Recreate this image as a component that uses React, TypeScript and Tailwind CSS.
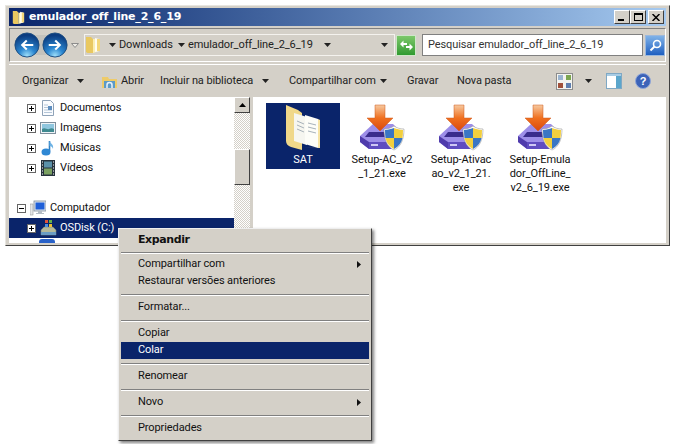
import React from 'react';

const font = { fontFamily: 'Roboto, sans-serif' };
const boldFont = { fontFamily: '"DejaVu Sans", sans-serif' };

const Arrow = ({ className = '' }: { className?: string }) => (
  <svg width="7" height="4" viewBox="0 0 7 4" className={`shrink-0 ${className}`}>
    <path d="M0 0h7L3.500 4z" fill="#222" />
  </svg>
);

const SmallFolder = ({ w = 16, h = 18 }: { w?: number; h?: number }) => (
  <svg width={w} height={h} viewBox="0 0 16 18" className="shrink-0">
    <path d="M1 1h5l2 2v14H2.500L1 16z" fill="#e9c860" />
    <path d="M8 3h6v12l-6 2z" fill="#fbeeb0" />
    <path d="M10 2l4 1v12l-4 1z" fill="#fffdf0" />
    <path d="M12 3h3v12h-3z" fill="#f3d77a" />
  </svg>
);

const NavButton = ({ dir }: { dir: 'left' | 'right' }) => (
  <svg width="26" height="26" viewBox="0 0 27 27" className="shrink-0">
    <defs>
      <radialGradient id={`nav-${dir}`} cx="50%" cy="95%" r="85%">
        <stop offset="0" stopColor="#9fe0fa" />
        <stop offset="0.400" stopColor="#2a86d0" />
        <stop offset="1" stopColor="#0b3c80" />
      </radialGradient>
    </defs>
    <circle cx="13.500" cy="13.500" r="12.500" fill={`url(#nav-${dir})`} stroke="#1c4d80" />
    <path
      d={dir === 'left' ? 'M7 13.500l5.500-5.500 1.500 1.500-3 3h9v2h-9l3 3-1.500 1.500z' : 'M20 13.500l-5.500-5.500-1.500 1.500 3 3H7v2h9l-3 3 1.500 1.500z'}
      fill="#fff"
    />
  </svg>
);

const Plus = ({ minus = false }: { minus?: boolean }) => (
  <svg width="9" height="9" viewBox="0 0 9 9" className="shrink-0">
    <rect x="0.500" y="0.500" width="8" height="8" fill="#fff" stroke="#666" />
    <path d={minus ? 'M2 4.500h5' : 'M2 4.500h5M4.500 2v5'} stroke="#000" />
  </svg>
);

const DocIcon = () => (
  <svg width="16" height="16" viewBox="0 0 16 16">
    <path d="M2.500.5h8l3 3v12h-11z" fill="#fafcff" stroke="#8fa3b8" />
    <path d="M4 5h4M4 7.500h8M4 10h8M4 12.500h8" stroke="#b4c6d8" />
    <rect x="8" y="6" width="4" height="4" fill="#5f8fc0" />
  </svg>
);

const ImageIcon = () => (
  <svg width="16" height="16" viewBox="0 0 16 16">
    <rect x="0.500" y="2.500" width="15" height="11" fill="#eef3f7" stroke="#7f8f9c" />
    <rect x="2" y="4" width="12" height="8" fill="#8fc6de" />
    <path d="M2 12V9c3-2 5 1 7 0s3-1 5 0v3z" fill="#3f8a90" />
  </svg>
);

const MusicIcon = () => (
  <svg width="16" height="16" viewBox="0 0 16 16">
    <path d="M9.500 1v10.500" stroke="#2f7fc2" strokeWidth="1.600" />
    <ellipse cx="6" cy="12" rx="4.500" ry="3.500" fill="#2f88d4" />
    <path d="M9.500 1c1 3 4.500 3 3.500 8-.5-2-2-3-3.500-3z" fill="#6db2e4" />
  </svg>
);

const FilmIcon = () => (
  <svg width="16" height="16" viewBox="0 0 16 16">
    <rect x="1" y="0" width="14" height="16" fill="#26323c" />
    <rect x="4" y="1.500" width="8" height="6" fill="#5a90a8" />
    <rect x="4" y="8.500" width="8" height="6" fill="#7aa060" />
    <path d="M2 2h1M2 5h1M2 8h1M2 11h1M2 14h1M13 2h1M13 5h1M13 8h1M13 11h1M13 14h1" stroke="#fff" />
  </svg>
);

const ComputerIcon = () => (
  <svg width="16" height="16" viewBox="0 0 16 16">
    <rect x="0" y="4" width="3" height="11" fill="#e4e6e8" stroke="#8a8a8a" strokeWidth="0.500" />
    <rect x="4" y="1" width="12" height="10" fill="#dfe6ee" stroke="#7d8a99" strokeWidth="0.800" />
    <rect x="5.500" y="2.500" width="9" height="7" fill="#1f5fd8" />
    <path d="M8 11h4v2h2v1H6v-1h2z" fill="#b4bcc4" />
  </svg>
);

const DriveIcon = () => (
  <svg width="18" height="18" viewBox="0 0 18 18" className="shrink-0">
    <path d="M2 11l3-3h9l3 3v5H2z" fill="#b4b89a" stroke="#7a8070" strokeWidth="0.600" />
    <rect x="2" y="13" width="15" height="3" fill="#6a9cc4" />
    <rect x="6" y="1" width="3" height="3" fill="#e2543a" />
    <rect x="10" y="1" width="3" height="3" fill="#62b04a" />
    <rect x="6" y="5" width="3" height="3" fill="#4a8ee0" />
    <rect x="10" y="5" width="3" height="3" fill="#f0c030" />
  </svg>
);

const SetupIcon = () => (
  <svg width="48" height="48" viewBox="0 0 48 48">
    <defs>
      <linearGradient id="setup-arrow" x1="0" y1="0" x2="0" y2="1">
        <stop offset="0" stopColor="#f6c9a0" />
        <stop offset="0.500" stopColor="#f0701f" />
        <stop offset="1" stopColor="#d9480f" />
      </linearGradient>
    </defs>
    <path d="M2 32l13-12h20l8 8v9L34 45H11L2 38z" fill="#9d8ee8" />
    <path d="M2 32l9 6v7l-9-7z" fill="#4f3bac" />
    <path d="M11 38h23v7H11z" fill="#5f4cc0" />
    <path d="M11 28h18l5 5H7z" fill="#3a2c8c" />
    <rect x="13" y="40" width="7" height="2" fill="#cfc8f4" />
    <path d="M17 1h10v13h8L22 27 9 14h8z" fill="url(#setup-arrow)" stroke="#cf5a1c" strokeWidth="0.500" />
    <path d="M36 22c3 2 6 3 10 3 0 10-3 18-10 21-7-3-10-11-10-21 4 0 7-1 10-3z" fill="#fff" stroke="#8a8a8a" strokeWidth="0.500" />
    <path d="M36 24v10h-8.500c-.3-2.500-.5-5-.5-8 3.500-.2 6-1 9-2z" fill="#3a76c4" />
    <path d="M36 24c3 1 5.500 1.800 9 2 0 3-.2 5.500-.5 8H36z" fill="#f2cf3e" />
    <path d="M27.500 34H36v11c-4.500-2.400-7.500-6-8.500-11z" fill="#f2cf3e" />
    <path d="M36 34h8.500c-1 5-4 8.600-8.500 11z" fill="#3a76c4" />
  </svg>
);

const BigFolder = () => (
  <svg width="38" height="47" viewBox="0 0 38 47">
    <path d="M2 0l12 5 4 3v37L7 42c-3-1-5-3-5-6z" fill="#f0d88a" />
    <path d="M10 8l13 4v28l-13-4z" fill="#f6f6f0" />
    <path d="M21 10l13 4v29l-13-4z" fill="#fdfdf8" />
    <path d="M13 16l7 3M13 20l7 3M13 24l7 3M24 18l8 2M24 22l8 2M24 26l8 2" stroke="#a8b2ba" />
    <path d="M34 14l2 1v28l-16-1 14 1z" fill="#f6e3a4" />
  </svg>
);

const ViewsIcon = () => (
  <svg width="17" height="17" viewBox="0 0 17 17">
    <rect x="0.500" y="0.500" width="16" height="16" fill="#f4f4f0" stroke="#8c8c8c" />
    <rect x="2" y="2" width="5" height="5" fill="#9ab4d0" />
    <rect x="10" y="2" width="5" height="5" fill="#7ca650" />
    <rect x="2" y="10" width="5" height="5" fill="#a0503a" />
    <rect x="10" y="10" width="5" height="5" fill="#5f7fb0" />
  </svg>
);

const PaneIcon = () => (
  <svg width="16" height="16" viewBox="0 0 16 16">
    <rect x="0.500" y="0.500" width="15" height="15" fill="#fff" stroke="#7fa8c4" />
    <rect x="1" y="1" width="14" height="2" fill="#a8cce4" />
    <rect x="10" y="3" width="5" height="12" fill="#5ba6cc" />
  </svg>
);

const HelpIcon = () => (
  <svg width="16" height="16" viewBox="0 0 16 16">
    <circle cx="8" cy="8" r="7.500" fill="#3c63b8" stroke="#8fa6d8" />
    <text x="8" y="12" textAnchor="middle" fontSize="11" fontWeight="bold" fill="#fff" fontFamily="Liberation Sans">?</text>
  </svg>
);

const WinButton = ({ children }: { children: React.ReactNode }) => (
  <div className="w-[16px] h-[14px] bg-[#d4d0c8] border border-t-white border-l-white border-r-[#404040] border-b-[#404040] flex items-center justify-center">
    {children}
  </div>
);

const TreeRow = ({ icon, label, selected = false, indent = 'pl-[18px]', minus = false }: {
  icon: React.ReactNode; label: string; selected?: boolean; indent?: string; minus?: boolean;
}) => (
  <div className={`h-[20px] flex items-center shrink-0 ${indent} ${selected ? 'bg-[#0a246a] text-white' : 'text-[#111]'}`}>
    <Plus minus={minus} />
    <span className="w-[16px] ml-[4px] flex justify-center shrink-0">{icon}</span>
    <span className="whitespace-nowrap ml-[4px]">{label}</span>
  </div>
);

const FileItem = ({ name }: { name: string[] }) => (
  <div className="w-[74px] flex flex-col items-center shrink-0 text-[#111]">
    <div className="h-[48px] mt-[1px]"><SetupIcon /></div>
    <div className="text-center leading-[14px] mt-[1px]">
      {name.map((line) => <div key={line} className="whitespace-nowrap">{line}</div>)}
    </div>
  </div>
);

const MenuSep = ({ short = false }: { short?: boolean }) => (
  <div className={`${short ? 'h-[7px]' : 'h-[9px]'} flex flex-col justify-center`}>
    <div className="h-[1px] bg-[#808080]" />
    <div className="h-[1px] bg-white" />
  </div>
);

const MenuItem = ({ label, active = false, sub = false }: {
  label: string; active?: boolean; sub?: boolean;
}) => (
  <div className={`h-[17px] flex items-center justify-between pl-[17px] pr-[8px] ${active ? 'bg-[#0a246a] text-white' : 'text-[#111]'}`}>
    <span className="whitespace-nowrap">{label}</span>
    {sub && (
      <svg width="4" height="7" viewBox="0 0 4 7"><path d="M0 0l4 3.500L0 7z" fill="#111" /></svg>
    )}
  </div>
);

export default function App() {
  return (
    <div className="relative w-[676px] h-[444px] bg-white overflow-hidden text-[11px] tracking-[-0.1px] pt-[5px] px-[5px]" style={font}>
      <div className="w-[665px] h-[241px] bg-[#d4d0c8] border border-t-[#e8e6e0] border-l-[#e8e6e0] border-r-[#404040] border-b-[#404040] px-[3px] pt-[2px] pb-[3px] flex flex-col">
        {/* title bar */}
        <div className="h-[18px] shrink-0 bg-gradient-to-r from-[#0a246a] to-[#a6caf0] flex items-center pl-[3px] pr-[2px]">
          <SmallFolder w={13} h={15} />
          <span className="ml-[4px] text-white font-bold text-[11px] tracking-[-0.2px]" style={boldFont}>emulador_off_line_2_6_19</span>
          <div className="ml-auto flex items-center">
            <WinButton><div className="w-[6px] h-[2px] bg-black mt-[6px] mr-[2px]" /></WinButton>
            <WinButton><div className="w-[9px] h-[8px] border border-black border-t-2" /></WinButton>
            <div className="ml-[2px]">
              <WinButton>
                <svg width="8" height="7" viewBox="0 0 8 7"><path d="M0.500 0L7.500 7M7.500 0L0.500 7" stroke="#000" strokeWidth="1.500" /></svg>
              </WinButton>
            </div>
          </div>
        </div>

        {/* address row */}
        <div className="h-[34px] mt-[2px] shrink-0 border border-t-[#808080] border-l-[#808080] border-r-white border-b-white flex items-center pl-[4px] whitespace-nowrap">
          <div className="flex items-center gap-[2px] bg-[#c4c2bc] rounded-full h-[20px]">
            <NavButton dir="left" />
            <NavButton dir="right" />
          </div>
          <svg width="8" height="5" viewBox="0 0 8 5" className="ml-[3px] shrink-0">
            <path d="M0.500 0.500h7L4 4.500z" fill="#eeece6" stroke="#8c8c8c" />
          </svg>
          <div className="ml-[5px] w-[311px] h-[22px] bg-[#d4d0c8] border border-[#f4f2ee] flex items-center text-[#222] shrink-0">
            <SmallFolder />
            <Arrow className="ml-[8px]" />
            <span className="ml-[3px] w-[52px]">Downloads</span>
            <Arrow className="ml-[7px]" />
            <span className="ml-[3px] w-[128px]">emulador_off_line_2_6_19</span>
            <Arrow className="ml-[8px]" />
            <Arrow className="ml-auto mr-[6px]" />
          </div>
          <div className="ml-[1px] w-[20px] h-[21px] bg-gradient-to-b from-[#7cc86a] to-[#2f9a30] border border-[#cfe6c8] flex items-center justify-center shrink-0">
            <svg width="15" height="11" viewBox="0 0 15 11">
              <path d="M1 4l3.500-3.500V3H8v2H4.500v2.500z" fill="#fff" />
              <path d="M14 7l-3.500 3.500V8H7V6h3.500V3.500z" fill="#fff" />
            </svg>
          </div>
          <div className="ml-[6px] w-[221px] h-[22px] bg-white border border-[#808080] flex items-center pl-[5px] text-[#333] shrink-0">Pesquisar emulador_off_line_2_6_19</div>
          <div className="ml-[2px] w-[20px] h-[21px] bg-gradient-to-b from-[#7fb2e8] to-[#1f5fc0] border border-[#9cb8dc] flex items-center justify-center shrink-0">
            <svg width="13" height="13" viewBox="0 0 13 13">
              <circle cx="8" cy="5" r="3.500" fill="none" stroke="#fff" strokeWidth="1.600" />
              <path d="M5.500 7.500L1.500 11.500" stroke="#fff" strokeWidth="2" />
            </svg>
          </div>
        </div>

        {/* command bar */}
        <div className="h-[33px] mt-[2px] shrink-0 border-t border-t-white flex items-center text-[#222] whitespace-nowrap">
          <span className="ml-[13px] w-[48px]">Organizar</span>
          <Arrow className="ml-[7px]" />
          <svg width="17" height="17" viewBox="0 0 17 17" className="ml-[17px] shrink-0">
            <path d="M1 4h6l1 2h8v9H1z" fill="#eecb6a" />
            <rect x="3" y="8" width="11" height="7" fill="#5c9ac8" />
            <path d="M6 15v-3a2.500 2.500 0 0 1 5 0v3" fill="none" stroke="#e8f2fa" strokeWidth="1.500" />
          </svg>
          <span className="ml-[3px] w-[22px]">Abrir</span>
          <span className="ml-[17px] w-[92px]">Incluir na biblioteca</span>
          <Arrow className="ml-[10px]" />
          <span className="ml-[20px] w-[83px]">Compartilhar com</span>
          <Arrow className="ml-[8px]" />
          <span className="ml-[20px] w-[33px]">Gravar</span>
          <span className="ml-[17px] w-[55px]">Nova pasta</span>
          <div className="ml-[44px]"><ViewsIcon /></div>
          <Arrow className="ml-[12px]" />
          <div className="ml-[14px]"><PaneIcon /></div>
          <div className="ml-[13px]"><HelpIcon /></div>
        </div>

        {/* panes */}
        <div className="flex-1 min-h-0 flex bg-white -mb-[1px]">
          <div className="w-[225px] overflow-hidden flex flex-col pt-[1px] shrink-0">
            <TreeRow icon={<DocIcon />} label="Documentos" />
            <TreeRow icon={<ImageIcon />} label="Imagens" />
            <TreeRow icon={<MusicIcon />} label="Músicas" />
            <TreeRow icon={<FilmIcon />} label="Vídeos" />
            <div className="h-[20px] shrink-0" />
            <TreeRow icon={<ComputerIcon />} label="Computador" indent="pl-[8px]" minus />
            <TreeRow icon={<DriveIcon />} label="OSDisk (C:)" selected />
            <div className="h-[20px] shrink-0 pl-[20px] pt-[1px]"><div className="ml-[10px] w-[16px] h-[8px] rounded-t-[3px] bg-[#2a62c8]" /></div>
          </div>
          <div className="w-[16px] shrink-0 flex flex-col bg-[repeating-conic-gradient(#d4d0c8_0_25%,#ffffff_0_50%)] bg-[length:2px_2px]">
            <div className="h-[16px] bg-[#d4d0c8] border border-t-white border-l-white border-r-[#404040] border-b-[#404040] flex items-center justify-center">
              <svg width="7" height="4" viewBox="0 0 7 4"><path d="M0 4h7L3.500 0z" fill="#000" /></svg>
            </div>
            <div className="h-[36px] mt-[36px] bg-[#d4d0c8] border border-t-white border-l-white border-r-[#404040] border-b-[#404040]" />
          </div>
          <div className="w-[3px] shrink-0 bg-[#d4d0c8]" />
          <div className="flex-1 flex gap-[5px] pl-[13px] pt-[6px]">
            <div className="w-[74px] h-[66px] bg-[#0a246a] flex flex-col items-center text-white shrink-0">
              <div className="h-[48px] pt-[2px]"><BigFolder /></div>
              <span className="mt-[1px]">SAT</span>
            </div>
            <FileItem name={['Setup-AC_v2', '_1_21.exe']} />
            <FileItem name={['Setup-Ativac', 'ao_v2_1_21.', 'exe']} />
            <FileItem name={['Setup-Emula', 'dor_OffLine_', 'v2_6_19.exe']} />
          </div>
        </div>
      </div>

      {/* context menu */}
      <div className="absolute left-[118px] top-[228px] w-[254px] h-[213px] bg-[#d4d0c8] border border-t-[#eeeeee] border-l-[#eeeeee] border-r-[#404040] border-b-[#404040] px-[2px] pt-[3px] shadow-[2px_2px_3px_rgba(0,0,0,0.5)]">
        <div className="h-[17px] flex items-center pl-[17px] text-[#111] font-bold text-[11px] tracking-[-0.4px]" style={boldFont}>Expandir</div>
        <MenuSep short />
        <MenuItem label="Compartilhar com" sub />
        <MenuItem label="Restaurar versões anteriores" />
        <MenuSep />
        <MenuItem label="Formatar..." />
        <MenuSep />
        <MenuItem label="Copiar" />
        <MenuItem label="Colar" active />
        <MenuSep />
        <MenuItem label="Renomear" />
        <MenuSep />
        <MenuItem label="Novo" sub />
        <MenuSep />
        <MenuItem label="Propriedades" />
      </div>
    </div>
  );
}
